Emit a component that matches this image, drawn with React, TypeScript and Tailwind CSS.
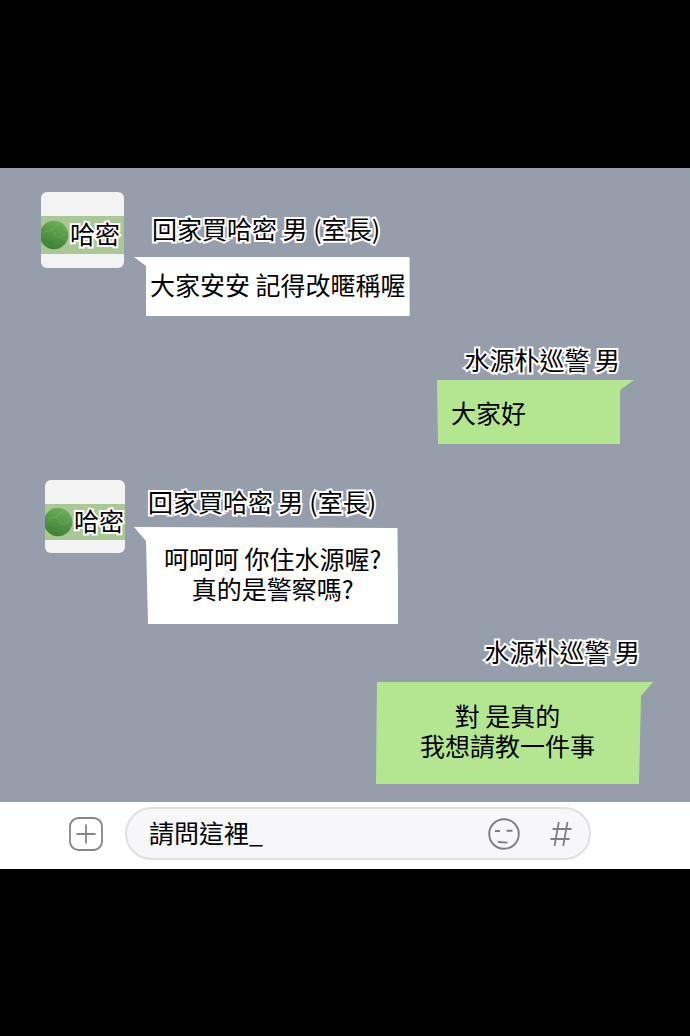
import { useState } from 'react';
import clsx from 'clsx';

interface Message {
  id: number;
  mine: boolean;
  name: string;
  text: string;
  row: string;
  nameBox: string;
  bubble: string;
}

const outline = '[-webkit-text-stroke:4px_#fff] [paint-order:stroke_fill] [stroke-linejoin:round]';

// the bubble's clip path includes its tail
const messages: Message[] = [
  {
    id: 1,
    mine: false,
    name: '回家買哈密 男 (室長)',
    text: '大家安安 記得改暱稱喔',
    row: 'pl-[41px]',
    nameBox: 'mt-[21px] mb-[14px] pl-[18px]',
    bubble:
      'pt-3 pb-[17px] pl-4 pr-1 [clip-path:polygon(0_0,100%_0,100%_100%,12px_100%,12px_9px)]',
  },
  {
    id: 2,
    mine: true,
    name: '水源朴巡警 男',
    text: '大家好',
    row: 'mt-7 pr-14',
    nameBox: 'mb-[6px] pr-[14px]',
    bubble:
      'py-[17px] pl-[14px] pr-[108px] [clip-path:polygon(0_0,100%_0,calc(100%-14px)_10px,calc(100%-14px)_100%,1px_100%)]',
  },
  {
    id: 3,
    mine: false,
    name: '回家買哈密 男 (室長)',
    text: '呵呵呵 你住水源喔?\n真的是警察嗎?',
    row: 'mt-9 pl-[45px]',
    nameBox: 'mt-[6px] mb-[11px] pl-[14px]',
    bubble:
      'pt-4 pb-[21px] pl-[30px] pr-[17px] [clip-path:polygon(0_0,calc(100%-1px)_1px,100%_100%,14px_100%,12px_14px)]',
  },
  {
    id: 4,
    mine: true,
    name: '水源朴巡警 男',
    text: '對 是真的\n我想請教一件事',
    row: 'mt-3 pr-[37px]',
    nameBox: 'mb-4 pr-[13px]',
    bubble:
      'pt-[18px] pb-6 pl-11 pr-[58px] [clip-path:polygon(1px_0,100%_0,calc(100%-12px)_14px,calc(100%-14px)_100%,0_100%)]',
  },
];

function Melon() {
  return (
    <svg viewBox="0 0 28 30" className="w-7 h-[30px] shrink-0" aria-hidden="true">
      <defs>
        <linearGradient id="melon" x1="0.7" y1="0" x2="0.35" y2="1">
          <stop offset="0" stopColor="#6fb058" />
          <stop offset="0.5" stopColor="#559746" />
          <stop offset="1" stopColor="#3f8136" />
        </linearGradient>
      </defs>
      <circle cx="13" cy="15" r="14.3" fill="url(#melon)" />
      <path d="M3 12 L11 10 L19 3 M11 10 L17 18 L26 14" fill="none" stroke="#85bd6c" strokeWidth="1.2" opacity="0.3" />
      <path d="M17 18 L24 24 M17 18 L10 23 L3 20 M10 23 L12 29" fill="none" stroke="#2f6c2a" strokeWidth="1" opacity="0.25" />
    </svg>
  );
}

function Avatar({ small }: { small: boolean }) {
  return (
    <div className={clsx('shrink-0 rounded-md overflow-hidden bg-[#f3f3f3] pt-6', small ? 'w-20 h-[73px]' : 'w-[83px] h-[76px]')}>
      <div className={clsx('flex items-center bg-[#a9c797]', small ? 'h-9' : 'h-[38px]')}>
        <Melon />
        <span className={clsx('pl-px pb-1 leading-[30px] whitespace-nowrap', outline)}>哈密</span>
      </div>
    </div>
  );
}

function MessageRow({ m }: { m: Message }) {
  return (
    <div className={clsx('flex items-start', m.row, m.mine && 'justify-end')}>
      {!m.mine && <Avatar small={m.id === 3} />}
      <div className={clsx('flex flex-col', m.mine ? 'items-end' : 'items-start', m.id === 1 && 'ml-[10px]', m.id === 3 && 'ml-[9px]')}>
        <div className={clsx('leading-[30px] whitespace-nowrap', outline, m.nameBox)}>{m.name}</div>
        <p className={clsx('leading-[30px] text-center whitespace-pre', m.mine ? 'bg-[#b4e691]' : 'bg-white', m.bubble)}>
          {m.text}
        </p>
      </div>
    </div>
  );
}

export default function App() {
  const [draft, setDraft] = useState('請問這裡_');

  return (
    <div className="min-h-screen bg-black pt-[168px] pb-[167px] text-[25px] text-black font-['Noto_Sans_CJK_TC',sans-serif]">
      <main className="bg-[#969dab] pt-6 pb-[18px]">
        {messages.map((m) => <MessageRow key={m.id} m={m} />)}
      </main>

      <footer className="flex items-center bg-white pt-[5px] pb-[9px] pl-[69px] pr-[99px]">
        <button aria-label="新增" className="shrink-0 w-[34px] h-[34px] mr-[22px]">
          <svg viewBox="0 0 34 34" fill="none" stroke="#858585" strokeWidth="1.8">
            <rect x="1" y="1" width="32" height="32" rx="8.5" />
            <path d="M17 7.500v19M7.500 17h19" />
          </svg>
        </button>
        <div className="flex-1 min-w-0 flex items-center h-[53px] pl-[22px] pr-[17px] rounded-full border-2 border-[#dfe0e2] bg-[#f7f7f9]">
          <input type="text" aria-label="訊息" value={draft} onChange={(e) => setDraft(e.target.value)}
            className="flex-1 min-w-0 h-10 pb-1 bg-transparent outline-none" />
          <button aria-label="表情" className="shrink-0 w-8 h-8 mr-[30px]">
            <svg viewBox="0 0 32 32" fill="none" stroke="#7f7f7f" strokeWidth="1.9">
              <circle cx="16" cy="16" r="14.8" />
              <path d="M7 13h5M18.500 12.800h6M10 24l9.500 0.600" />
            </svg>
          </button>
          <button aria-label="標籤" className="shrink-0 w-[22px] h-[26px]">
            <svg viewBox="0 0 22 26" fill="none" stroke="#7f7f7f" strokeWidth="1.8">
              <path d="M8.800 1L4.500 25M17.500 1L13.200 25M2.500 8H21.500M0.500 18H19.500" />
            </svg>
          </button>
        </div>
      </footer>
    </div>
  );
}
